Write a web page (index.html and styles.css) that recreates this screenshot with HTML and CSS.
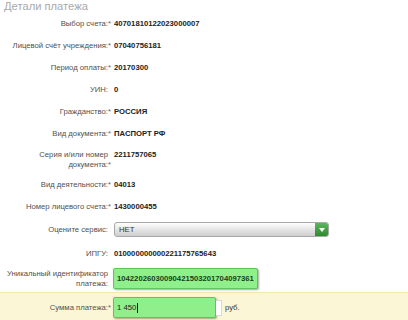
FILE: index.html
```html
<!DOCTYPE html>
<html lang="ru">
<head>
  <meta charset="UTF-8" />
  <meta name="viewport" content="width=device-width, initial-scale=1.0"/>
  <title>Детали платежа</title>
  <link rel="stylesheet" href="styles.css">
</head>
<body>

  <!-- Payment details -->
  <div class="title">Детали платежа</div>

  <div class="form">
    <div class="row">
      <div class="label">Выбор счета:<span class="req">*</span></div>
      <div class="value">40701810122023000007</div>
    </div>
    <div class="row">
      <div class="label">Лицевой счёт учреждения:<span class="req">*</span></div>
      <div class="value">07040756181</div>
    </div>
    <div class="row">
      <div class="label">Период оплаты:<span class="req">*</span></div>
      <div class="value">20170300</div>
    </div>
    <div class="row">
      <div class="label">УИН:</div>
      <div class="value">0</div>
    </div>
    <div class="row">
      <div class="label">Гражданство:<span class="req">*</span></div>
      <div class="value">РОССИЯ</div>
    </div>
    <div class="row">
      <div class="label">Вид документа:<span class="req">*</span></div>
      <div class="value">ПАСПОРТ РФ</div>
    </div>
    <div class="row row-two">
      <div class="label">Серия и/или номер<br>документа:<span class="req">*</span></div>
      <div class="value">2211757065</div>
    </div>
    <div class="row">
      <div class="label">Вид деятельности:<span class="req">*</span></div>
      <div class="value">04013</div>
    </div>
    <div class="row">
      <div class="label">Номер лицевого счета:<span class="req">*</span></div>
      <div class="value">1430000455</div>
    </div>
    <div class="row row-select">
      <div class="label">Оцените сервис:</div>
      <div class="select">
        <span class="select-text">НЕТ</span>
        <span class="select-btn">
          <svg width="6" height="4" viewBox="0 0 6 4"><path d="M0 0h6L3 4z" fill="#fff"/></svg>
        </span>
      </div>
    </div>
    <div class="row">
      <div class="label">ИПГУ:</div>
      <div class="value">010000000000221175765643</div>
    </div>
    <div class="row row-field">
      <div class="label">Уникальный идентификатор<br>платежа:</div>
      <div class="field field-id">10422026030090421503201704097361</div>
    </div>
    <div class="row row-sum">
      <div class="label">Сумма платежа:<span class="req">*</span></div>
      <div class="sum">
        <div class="field field-sum">1 450<span class="caret"></span></div>
        <div class="stub"></div>
        <span class="unit">руб.</span>
      </div>
    </div>
  </div>

</body>
</html>
```

FILE: styles.css
```css
* {
  box-sizing: border-box;
}
body, html {
  margin: 0;
  padding: 0;
  font-family: 'Liberation Sans', Arial, sans-serif;
  background-color: #ffffff;
}

.title {
  font-size: 11.2px;
  line-height: 13px;
  color: #a9a9a9;
  padding: 0 4px;
}

.row {
  display: grid;
  grid-template-columns: 108px 1fr;
  column-gap: 6px;
  padding: 6px 0;
  font-size: 7.7px;
  line-height: 10px;
}
.row-two {
  padding: 5px 0 4px;
}
.row-select {
  padding: 4px 0 6px;
  align-items: center;
}
.row-field {
  padding: 3px 0 2px;
  align-items: center;
  justify-items: start;
}
.row-field .label {
  justify-self: end;
}
.row-sum {
  margin-top: 1px;
  padding: 4px 0 6px;
  align-items: center;
  background: #fbf7d6;
  border-top: 1px solid #efe7ac;
}

.label {
  text-align: right;
  color: #505050;
}
.req {
  color: #666;
  margin-right: -3px;
}
.value {
  font-weight: bold;
  color: #222;
}

.select {
  width: 215px;
  height: 15px;
  display: flex;
  align-items: center;
  justify-content: space-between;
  border: 1px solid #a8a8a8;
  border-radius: 3px;
  background: linear-gradient(#ffffff, #e2e2e2 55%, #cfcfcf);
  overflow: hidden;
}
.select-text {
  padding-left: 4px;
  color: #333;
}
.select-btn {
  width: 13px;
  height: 100%;
  display: flex;
  align-items: center;
  justify-content: center;
  background: linear-gradient(#5cb85c, #2f8a2f);
}

.field {
  background: #8ff08b;
  border: 1px solid #62c35e;
  border-radius: 2px;
  box-shadow: 1px 1px 2px rgba(0, 0, 0, 0.35);
  height: 21px;
  display: flex;
  align-items: center;
  padding: 0 3px;
}
.field-id {
  width: max-content;
  font-weight: bold;
  color: #1d3d1d;
  margin-left: -1px;
}
.field-sum {
  width: 103px;
  color: #222;
  margin-left: -1px;
}
.caret {
  display: inline-block;
  width: 1px;
  height: 10px;
  background: #111;
  margin-left: 1px;
}

.sum {
  display: flex;
  align-items: center;
}
.stub {
  width: 6px;
  height: 16px;
  background: #fff;
  border: 1px solid #d8d8d8;
  border-left: none;
}
.unit {
  margin-left: 3px;
  color: #333;
}
```
